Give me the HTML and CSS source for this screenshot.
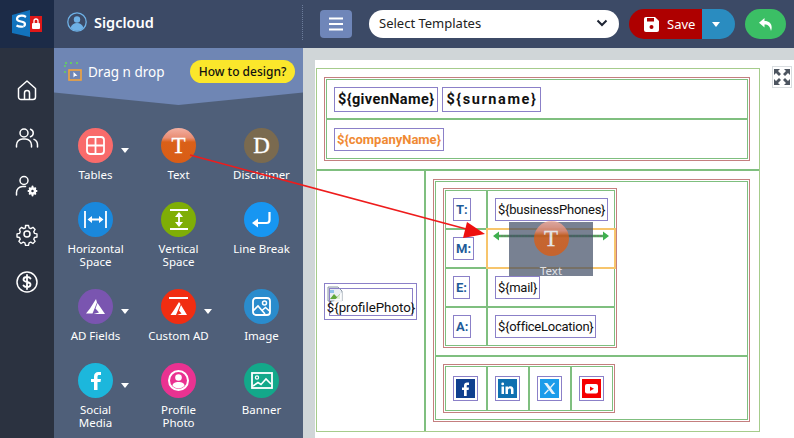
FILE: index.html
```html
<!DOCTYPE html>
<html lang="en">
<head>
<meta charset="utf-8">
<title>Sigcloud</title>
<link rel="stylesheet" href="styles.css">
</head>
<body>
<div class="app">
  <aside class="rail">
    <div class="logo">
      <svg width="54" height="48" viewBox="0 0 54 48">
        <path d="M12 15 L30 10 V37 L12 33 Z" fill="#1273bd"/>
        <path d="M26 17c-4-2.500-9-1-9 2 0 3.500 8 1.500 8 5 0 3-5 3.500-8.500 1.500" fill="none" stroke="#fff" stroke-width="2.200"/>
        <path d="M17 23c2 1.500 5 1 6.500 3" fill="none" stroke="#1273bd" stroke-width="1"/>
        <path d="M30 16 H42 V32 H30 Z" fill="#e01818"/>
        <rect x="32" y="23" width="8" height="6" rx="1" fill="#fff"/>
        <path d="M34 23 v-2 a2 2 0 0 1 4 0 v2" fill="none" stroke="#fff" stroke-width="1.300"/>
      </svg>
    </div>
    <nav class="rail-nav">
      <svg class="rail-icon" viewBox="0 0 24 24"><path d="M3.500 10.500 12 3l8.500 7.500V19a2.500 2.500 0 0 1-2.500 2.500H6A2.500 2.500 0 0 1 3.500 19Z M9.500 21.500V15a2.500 2.500 0 0 1 5 0v6.500"/></svg>
      <svg class="rail-icon" viewBox="0 0 24 24"><circle cx="9" cy="7" r="4"/><path d="M1.500 21v-2a6 6 0 0 1 6-6h3a6 6 0 0 1 6 6v2 M15.500 3.200a4 4 0 0 1 0 7.600 M19 13.400a6 6 0 0 1 3.500 5.600v2"/></svg>
      <svg class="rail-icon" viewBox="0 0 24 24"><circle cx="9" cy="6.500" r="4"/><path d="M1.500 21v-2.500a6 6 0 0 1 6-6h3"/><circle cx="17.500" cy="17" r="2.500" stroke-width="2.500"/><path d="M17.500 12.500v1.500 M17.500 20v1.500 M13.500 17H15 M20 17h1.500 M14.700 14.200l1 1 M19.300 18.800l1 1 M14.700 19.800l1-1 M19.300 15.200l1-1" stroke-width="2"/></svg>
      <svg class="rail-icon" viewBox="0 0 24 24"><circle cx="12" cy="12" r="3"/><path d="M10.300 2.500h3.400l.6 2.800 1.900.8 2.400-1.500 2.400 2.400-1.500 2.400.8 1.900 2.800.6v3.400l-2.800.6-.8 1.900 1.500 2.400-2.400 2.400-2.400-1.500-1.900.8-.6 2.800h-3.400l-.6-2.800-1.900-.8-2.400 1.500-2.400-2.400 1.500-2.400-.8-1.900-2.800-.6v-3.400l2.800-.6.8-1.900L3.600 7l2.400-2.400 2.400 1.500 1.900-.8Z" transform="translate(1.200 1.200) scale(.9)"/></svg>
      <svg class="rail-icon" viewBox="0 0 24 24"><circle cx="12" cy="12" r="10"/><path d="M15.500 8.500C15 7.500 13.500 7 12 7c-2 0-3.500 1-3.500 2.500 0 3.500 7 1.500 7 5 0 1.500-1.500 2.500-3.500 2.500-1.500 0-3-.5-3.500-1.500 M12 5v14" stroke-width="1.800"/></svg>
    </nav>
  </aside>

  <div class="main">
    <header class="topbar">
      <div class="brand">
        <svg class="avatar" width="20" height="20" viewBox="0 0 20 20">
          <circle cx="10" cy="10" r="9.200" fill="#3c4a66" stroke="#6eb1e6" stroke-width="1.300"/>
          <circle cx="10" cy="7.500" r="3.200" fill="#6eb1e6"/>
          <path d="M3.500 16c1-3.500 3.500-5 6.500-5s5.500 1.500 6.500 5a9 9 0 0 1-13 0Z" fill="#6eb1e6"/>
        </svg>
        <span class="brand-name">Sigcloud</span>
      </div>
      <div class="tools">
        <button class="menu-btn" type="button">
          <svg width="16" height="14" viewBox="0 0 16 14"><path d="M1 1.500h14M1 7h14M1 12.500h14" stroke="#fff" stroke-width="2"/></svg>
        </button>
        <div class="select">
          <span>Select Templates</span>
          <svg width="12" height="8" viewBox="0 0 12 8"><path d="M1.500 1.500 6 6l4.500-4.500" fill="none" stroke="#1d2433" stroke-width="2"/></svg>
        </div>
        <div class="save">
          <div class="save-main">
            <svg width="15" height="15" viewBox="0 0 15 15"><path d="M0 2a2 2 0 0 1 2-2h9l4 4v9a2 2 0 0 1-2 2H2a2 2 0 0 1-2-2Z" fill="#fff"/><rect x="3" y="1" width="7" height="3.500" fill="#ae0000"/><circle cx="7.500" cy="10" r="2" fill="#ae0000"/></svg>
            <span>Save</span>
          </div>
          <div class="save-more"><i class="caret"></i></div>
        </div>
        <button class="back-btn" type="button">
          <svg width="16" height="15" viewBox="0 0 16 15"><path d="M6.500 1 1 5.800l5.500 4.700V7.500c3.500 0 5.500 1.500 6.500 6.500 2-5.500-.5-10-6.500-10Z" fill="#fff"/></svg>
        </button>
      </div>
    </header>

    <div class="body">
      <section class="panel">
        <div class="panel-head">
          <div class="drag">
            <svg width="18" height="20" viewBox="0 0 18 20"><path d="M1 3v3 M1 1h2 M6 1h3 M12 1h2 M1 9v2" stroke="#62e04e" stroke-width="1.300" stroke-dasharray="2 2" fill="none"/><rect x="5" y="8" width="12" height="10" fill="none" stroke="#f2a33c" stroke-width="1.600"/><path d="M9.500 10v5.500l1.500-1.500 2.500-.2Z" fill="#fff"/></svg>
            <span>Drag n drop</span>
          </div>
          <span class="how">How to design?</span>
        </div>
        <div class="tool-grid">
          <div class="item">
            <div class="dot c-tables"><svg width="21" height="21" viewBox="0 0 21 21"><rect x="2" y="2" width="17" height="17" rx="3" fill="none" stroke="#fff" stroke-width="1.800"/><path d="M10.500 2v17M2 10.500h17" stroke="#fff" stroke-width="1.800"/></svg></div>
            <i class="caret item-caret"></i>
            <span class="label">Tables</span>
          </div>
          <div class="item">
            <div class="dot c-text"><span class="serif">T</span></div>
            <span class="label">Text</span>
          </div>
          <div class="item">
            <div class="dot c-disc"><span class="serif">D</span></div>
            <span class="label">Disclaimer</span>
          </div>

          <div class="item">
            <div class="dot c-hspace"><svg width="23" height="17" viewBox="0 0 23 17"><path d="M1 0v17M22 0v17M5 8.500h13" stroke="#fff" stroke-width="1.800"/><path d="M3.500 8.500 8 5v7ZM19.500 8.500 15 5v7Z" fill="#fff"/></svg></div>
            <span class="label">Horizontal<br>Space</span>
          </div>
          <div class="item">
            <div class="dot c-vspace"><svg width="18" height="21" viewBox="0 0 18 21"><path d="M0 1h18M0 20h18M9 5v11" stroke="#fff" stroke-width="1.800"/><path d="M9 3l4 5H5ZM9 18l4-5H5Z" fill="#fff"/></svg></div>
            <span class="label">Vertical<br>Space</span>
          </div>
          <div class="item">
            <div class="dot c-break"><svg width="19" height="16" viewBox="0 0 19 16"><path d="M17.500 0v8a3 3 0 0 1-3 3H4" fill="none" stroke="#fff" stroke-width="2.200"/><path d="M0 11l6-4.500v9Z" fill="#fff"/></svg></div>
            <span class="label">Line Break</span>
          </div>

          <div class="item">
            <div class="dot c-ad"><svg width="19" height="15" viewBox="0 0 19 15"><path d="M10 0 4 9.500l-4 5h6.500L11 3.500Z M11.500 4 19 15H7.500l5.500-1.500-3.500-4Z" fill="#fff"/></svg></div>
            <i class="caret item-caret"></i>
            <span class="label">AD Fields</span>
          </div>
          <div class="item">
            <div class="dot c-custom"><svg width="19" height="19" viewBox="0 0 19 19"><path d="M0 1h19" stroke="#fff" stroke-width="2"/><path d="M10 5 5 13l-3.500 5H7l4.500-11Z M12 8l6 10H8l4.500-1.500-2.500-3Z" fill="#fff"/></svg></div>
            <i class="caret item-caret"></i>
            <span class="label">Custom AD</span>
          </div>
          <div class="item">
            <div class="dot c-image"><svg width="19" height="19" viewBox="0 0 19 19"><rect x="1" y="1" width="17" height="17" rx="3" fill="none" stroke="#fff" stroke-width="1.800"/><circle cx="12.500" cy="6" r="2" fill="none" stroke="#fff" stroke-width="1.500"/><path d="M1 14l5-5 7 8 M10.500 13l3-2.500 4.500 4" fill="none" stroke="#fff" stroke-width="1.600"/></svg></div>
            <span class="label">Image</span>
          </div>

          <div class="item">
            <div class="dot c-social"><svg width="10" height="18" viewBox="0 0 10 18"><path d="M3 18V10H0V7h3V4.500C3 1.500 4.800 0 7.200 0H10v3H8c-1 0-1.500.6-1.500 1.500V7H10l-.5 3h-3v8Z" fill="#fff"/></svg></div>
            <i class="caret item-caret"></i>
            <span class="label">Social<br>Media</span>
          </div>
          <div class="item">
            <div class="dot c-profile"><svg width="21" height="21" viewBox="0 0 21 21"><circle cx="10.500" cy="10.500" r="9.500" fill="none" stroke="#fff" stroke-width="2"/><circle cx="10.500" cy="7.500" r="3.300" fill="#fff"/><path d="M4.500 16c0-3 2.500-4 6-4s6 1 6 4a8.500 8.500 0 0 1-12 0Z" fill="#fff"/></svg></div>
            <span class="label">Profile<br>Photo</span>
          </div>
          <div class="item">
            <div class="dot c-banner"><svg width="22" height="17" viewBox="0 0 22 17"><rect x="1" y="1" width="20" height="15" fill="none" stroke="#fff" stroke-width="1.800"/><circle cx="6" cy="5.500" r="1.600" fill="none" stroke="#fff" stroke-width="1.200"/><path d="M2 14l5-3.500 3 2 5-5.500 5 5" fill="none" stroke="#fff" stroke-width="1.600"/></svg></div>
            <span class="label">Banner</span>
          </div>
        </div>
      </section>

      <section class="canvas">
        <div class="card">
          <div class="sheet">
            <div class="sheet-top">
              <div class="frame">
                <div class="frame-in name-rows">
                  <div class="name-row">
                    <span class="chip chip-name">${givenName}</span>
                    <span class="chip chip-name chip-wide">${surname}</span>
                  </div>
                  <div class="name-row">
                    <span class="chip chip-company">${companyName}</span>
                  </div>
                </div>
              </div>
            </div>
            <div class="sheet-bottom">
              <div class="photo-cell">
                <div class="chip-photo">
                  <svg class="broken" width="16" height="16" viewBox="0 0 16 16"><path d="M1 1h10l4 4v10H1Z" fill="#e8edf2" stroke="#8d99a6"/><path d="M3 13l4-5 3 3 3-3v5Z" fill="#5fa83a"/><path d="M3 4h4v3H3Z" fill="#8fc0ea"/><path d="M15 6 6 16h9Z" fill="#fff" opacity=".8"/></svg>
                  <span class="photo-text">${profilePhoto}</span>
                </div>
              </div>
              <div class="contact-cell">
                <div class="frame">
                  <div class="frame-in contact-rows">
                    <div class="contact-top">
                      <div class="frame frame-fit">
                        <div class="frame-in contact-grid">
                          <div class="cell"><span class="chip chip-key">T:</span></div>
                          <div class="cell"><span class="chip">${businessPhones}</span></div>
                          <div class="cell"><span class="chip chip-key">M:</span></div>
                          <div class="cell cell-drop">
                            <svg class="marker" width="116" height="10" viewBox="0 0 116 10"><path d="M4 5h108" stroke="#4fae5c" stroke-width="2.500"/><path d="M5 5h106" stroke="#7a6f6a" stroke-width="1" stroke-dasharray="2 1"/><path d="M0 5l6-4.500v9ZM116 5l-6-4.500v9Z" fill="#3fb04f"/></svg>
                          </div>
                          <div class="cell"><span class="chip chip-key">E:</span></div>
                          <div class="cell"><span class="chip">${mail}</span></div>
                          <div class="cell"><span class="chip chip-key">A:</span></div>
                          <div class="cell"><span class="chip">${officeLocation}</span></div>
                        </div>
                      </div>
                    </div>
                    <div class="contact-social">
                      <div class="frame frame-fit">
                        <div class="frame-in social-grid">
                          <div class="cell"><span class="chip-social"><svg width="19" height="19" viewBox="0 0 19 19"><rect width="19" height="19" fill="#10408f"/><path d="M8 17v-6H6V8.500h2V6.500C8 4.500 9.300 3.500 11 3.500h2V6h-1.300c-.7 0-1 .4-1 1v1.500H13l-.4 2.500h-1.900v6Z" fill="#fff"/></svg></span></div>
                          <div class="cell"><span class="chip-social"><svg width="19" height="19" viewBox="0 0 19 19"><rect width="19" height="19" fill="#0f70b0"/><path d="M3.500 7.500h2.500V15H3.500Z M4.700 3.500a1.400 1.400 0 1 1 0 2.800 1.400 1.400 0 0 1 0-2.800Z M7.500 7.500H10v1c.5-.8 1.400-1.200 2.500-1.200 2 0 3 1.200 3 3.500V15H13v-3.800c0-1.200-.4-1.800-1.300-1.800s-1.700.6-1.700 1.800V15H7.500Z" fill="#fff"/></svg></span></div>
                          <div class="cell"><span class="chip-social"><svg width="19" height="19" viewBox="0 0 19 19"><rect width="19" height="19" fill="#1c9cea"/><path d="M4 4h3.300l8 11h-3.300Z" fill="#e8f3fb"/><path d="M14.500 4 10.300 8.700 M8.500 10.700 4.500 15" stroke="#e8f3fb" stroke-width="1.300"/></svg></span></div>
                          <div class="cell"><span class="chip-social"><svg width="19" height="19" viewBox="0 0 19 19"><rect width="19" height="19" fill="#f50000"/><rect x="3" y="5" width="13" height="9.500" rx="2" fill="#fff"/><path d="M8 7.500l4 2.200-4 2.300Z" fill="#f50000"/></svg></span></div>
                        </div>
                      </div>
                    </div>
                  </div>
                </div>
              </div>
            </div>
          </div>
          <div class="fullscreen">
            <svg width="18" height="18" viewBox="0 0 18 18"><path d="M1 1h6L5 3l3 3-2 2-3-3-2 2Z M17 1v6l-2-2-3 3-2-2 3-3-2-2Z M1 17v-6l2 2 3-3 2 2-3 3 2 2Z M17 17h-6l2-2-3-3 2-2 3 3 2-2Z" fill="#4d5560"/></svg>
          </div>
        </div>
      </section>
    </div>
  </div>
</div>

<div class="ghost">
  <div class="dot c-text ghost-dot"><span class="serif">T</span></div>
  <span class="ghost-label">Text</span>
</div>
<svg class="arrow" width="794" height="438" viewBox="0 0 794 438">
  <path d="M190 155 470 230" stroke="#ee1c1c" stroke-width="1.500" fill="none"/>
  <path d="M485 234 467 222 463 238Z" fill="#ee0f0f"/>
</svg>
</body>
</html>
```
FILE: styles.css
```css
* { box-sizing: border-box; }
html, body { margin: 0; padding: 0; }
body {
  position: relative;
  width: 794px;
  height: 438px;
  overflow: hidden;
  font-family: "Noto Sans", "Open Sans", sans-serif;
  color: #111;
}
.app { display: flex; width: 794px; height: 438px; }

/* Left rail */
.rail { width: 54px; background: #2b3240; flex: none; }
.logo { height: 48px; background: #1c2b47; }
.logo svg { display: block; }
.rail-nav {
  display: flex;
  flex-direction: column;
  align-items: center;
  gap: 24px;
  padding-top: 30px;
}
.rail-icon {
  width: 24px;
  height: 24px;
  fill: none;
  stroke: #fff;
  stroke-width: 1.500;
  stroke-linejoin: round;
  stroke-linecap: round;
}

.main { flex: 1; min-width: 0; display: flex; flex-direction: column; }

/* Top bar */
.topbar {
  height: 48px;
  flex: none;
  display: flex;
  background: #3c4a66;
}
.brand {
  width: 249px;
  display: flex;
  align-items: center;
  gap: 7px;
  padding: 0 0 4px 13px;
  position: relative;
}
.brand::after {
  content: "";
  position: absolute;
  right: 0;
  top: 5px;
  bottom: 8px;
  border-right: 1px dotted #6c7c9a;
}
.avatar { flex: none; }
.brand-name { color: #fff; font-size: 14.500px; font-weight: 600; }
.tools {
  flex: 1;
  display: flex;
  align-items: center;
  padding: 0 8px 0 17px;
}
.menu-btn {
  width: 32px;
  height: 28px;
  border: 0;
  padding: 0;
  border-radius: 4px;
  background: #6f86b9;
  display: flex;
  align-items: center;
  justify-content: center;
  margin-right: 17px;
}
.select {
  width: 250px;
  height: 28px;
  border-radius: 14px;
  background: #fff;
  display: flex;
  align-items: center;
  justify-content: space-between;
  padding: 0 11px 2px 10px;
  font-size: 13px;
  color: #222;
  margin-right: 10px;
}
.save { display: flex; height: 30px; margin-right: 10px; }
.save-main {
  width: 73px;
  background: #ae0000;
  border-radius: 15px 0 0 15px;
  display: flex;
  align-items: center;
  gap: 8px;
  padding-left: 15px;
  color: #fff;
  font-size: 13px;
}
.save-more {
  width: 33px;
  background: #2a8cc0;
  border-radius: 0 15px 15px 0;
  display: flex;
  align-items: center;
  justify-content: center;
  padding-right: 5px;
}
.caret {
  display: block;
  width: 0;
  height: 0;
  border-left: 4px solid transparent;
  border-right: 4px solid transparent;
  border-top: 5px solid #fff;
}
.back-btn {
  width: 41px;
  height: 30px;
  border: 0;
  padding: 0;
  border-radius: 15px;
  background: #3bbf65;
  display: flex;
  align-items: center;
  justify-content: center;
}

.body { flex: 1; display: flex; min-height: 0; }

/* Panel */
.panel { width: 249px; flex: none; background: #4f5f79; }
.panel-head {
  height: 57px;
  background: #6f86b4;
  clip-path: polygon(0 0, 100% 0, 100% 78%, 50% 100%, 0 78%);
  display: flex;
  align-items: center;
  justify-content: space-between;
  padding: 0 8px 10px 10px;
}
.drag {
  display: flex;
  align-items: center;
  gap: 6px;
  color: #fff;
  font-size: 13.500px;
}
.how {
  background: #fbe72b;
  color: #111;
  border-radius: 12px;
  height: 23px;
  width: 105px;
  display: flex;
  align-items: center;
  justify-content: center;
  font-size: 12px;
  font-weight: 500;
}
.tool-grid {
  display: grid;
  grid-template-columns: repeat(3, 83px);
  row-gap: 21px;
  align-content: start;
  padding-top: 23px;
}
.item {
  position: relative;
  display: flex;
  flex-direction: column;
  align-items: center;
}
.item-caret {
  position: absolute;
  left: 67px;
  top: 20px;
}
.dot {
  width: 35px;
  height: 35px;
  border-radius: 50%;
  display: flex;
  align-items: center;
  justify-content: center;
  flex: none;
}
.label {
  margin-top: 5px;
  color: #fff;
  font-size: 11.500px;
  line-height: 13px;
  text-align: center;
  white-space: nowrap;
}
.serif {
  font-family: "Liberation Serif", serif;
  font-weight: 400;
  font-size: 23px;
  color: #fff;
  line-height: 1;
  -webkit-text-stroke: .3px #fff;
}
.c-tables { background: #f96b6b; }
.c-text { background: linear-gradient(#f3b0a2 0, #e98d73 28%, #da6018 40%, #d95d16 100%); }
.c-disc { background: #7a6a4f; }
.c-hspace { background: #1a88dc; }
.c-vspace { background: #7fae06; }
.c-break { background: #1796f2; }
.c-ad { background: #7a55b0; }
.c-custom { background: #f12d11; }
.c-image { background: #2a8ccd; }
.c-social { background: #1cb7dc; }
.c-profile { background: #ea3291; }
.c-banner { background: #13a88a; }

/* Canvas */
.canvas {
  flex: 1;
  min-width: 0;
  background: #d0d6d8;
  padding: 12px 0 0 12px;
}
.card {
  height: 100%;
  background: #fff;
  display: flex;
  align-items: flex-start;
  gap: 12px;
  padding: 6px 0 0 1px;
}
.sheet {
  width: 444px;
  height: 364px;
  margin-top: 2px;
  border: 1px solid #a6cc8c;
  flex: none;
}
.sheet-top {
  height: 102px;
  border-bottom: 2px solid #7fbf7f;
  padding: 8px 9px 0 7px;
}
.frame { border: 1px solid #c47f7f; padding: 1px; background: #fff; }
.frame-in { border: 1px solid #7fbf7f; }
.frame-fit { width: max-content; }
.name-rows {
  height: 80px;
  display: grid;
  grid-template-rows: 38px 38px;
  row-gap: 2px;
  background: #7fbf7f;
}
.name-row {
  display: flex;
  align-items: center;
  gap: 4px;
  background: #fff;
  padding-left: 7px;
}
.chip {
  display: inline-flex;
  align-items: center;
  height: 23px;
  padding: 0 2px;
  border: 1px solid #8b80c8;
  font-family: Roboto, "Noto Sans", sans-serif;
  font-size: 13px;
  letter-spacing: -.25px;
  color: #111;
  white-space: nowrap;
  background: #fff;
}
.chip-name { height: 25px; font-weight: 700; font-size: 14.500px; padding: 0 3px; letter-spacing: .4px; }
.chip-wide { letter-spacing: 1.600px; }
.chip-company { font-weight: 700; font-size: 13px; letter-spacing: 0; color: #f08a33; }
.chip-key { font-weight: 700; font-size: 13px; letter-spacing: 0; color: #1f5c99; }

.sheet-bottom {
  height: 260px;
  display: flex;
}
.photo-cell {
  width: 109px;
  flex: none;
  border-right: 2px solid #7fbf7f;
  display: flex;
  align-items: center;
  padding-left: 7px;
}
.chip-photo {
  position: relative;
  width: 93px;
  height: 37px;
  border: 1px solid #8b80c8;
  padding: 2px;
}
.broken { display: block; }
.photo-text {
  position: absolute;
  left: 4px;
  top: 4px;
  width: 84px;
  height: 28px;
  border: 1px solid #8b80c8;
  display: flex;
  align-items: flex-end;
  justify-content: center;
  font-family: Roboto, "Noto Sans", sans-serif;
  font-size: 13.300px;
  line-height: 14px;
  white-space: nowrap;
}
.contact-cell { flex: 1; padding: 8px 9px 9px 7px; min-width: 0; }
.contact-rows { height: 239px; display: flex; flex-direction: column; }
.contact-top {
  height: 175px;
  flex: none;
  border-bottom: 2px solid #7fbf7f;
  padding: 6px 0 0 7px;
}
.contact-social { padding: 7px 0 0 7px; }
.contact-grid {
  display: grid;
  grid-template-columns: 40px 126px;
  grid-auto-rows: 37px;
  gap: 2px;
  background: #7fbf7f;
}
.social-grid {
  display: grid;
  grid-template-columns: repeat(4, 40px);
  grid-auto-rows: 43px;
  gap: 2px;
  background: #7fbf7f;
}
.cell {
  background: #fff;
  display: flex;
  align-items: center;
  padding-left: 7px;
  position: relative;
}
.cell-drop { outline: 2px solid #f7c56c; outline-offset: 0; z-index: 1; }
.marker { position: absolute; left: 5px; top: 1px; }
.chip-social {
  display: block;
  width: 25px;
  height: 25px;
  padding: 2px 2px;
  border: 1px solid #8b80c8;
}
.chip-social svg { display: block; }
.fullscreen {
  width: 20px;
  height: 22px;
  flex: none;
  background: #fff;
  border: 1px solid #d9dde0;
  display: flex;
  align-items: center;
  justify-content: center;
}

/* Drag overlays */
.ghost {
  position: absolute;
  z-index: 2;
  left: 509px;
  top: 222px;
  width: 84px;
  height: 54px;
  background: rgba(62, 75, 100, .7);
  display: flex;
  flex-direction: column;
  align-items: center;
}
.ghost-dot { opacity: .8; margin-top: -1px; }
.ghost-label {
  color: rgba(255, 255, 255, .8);
  font-size: 11.500px;
  line-height: 13px;
  margin-top: 8px;
}
.arrow { position: absolute; z-index: 3; left: 0; top: 0; pointer-events: none; }
```
